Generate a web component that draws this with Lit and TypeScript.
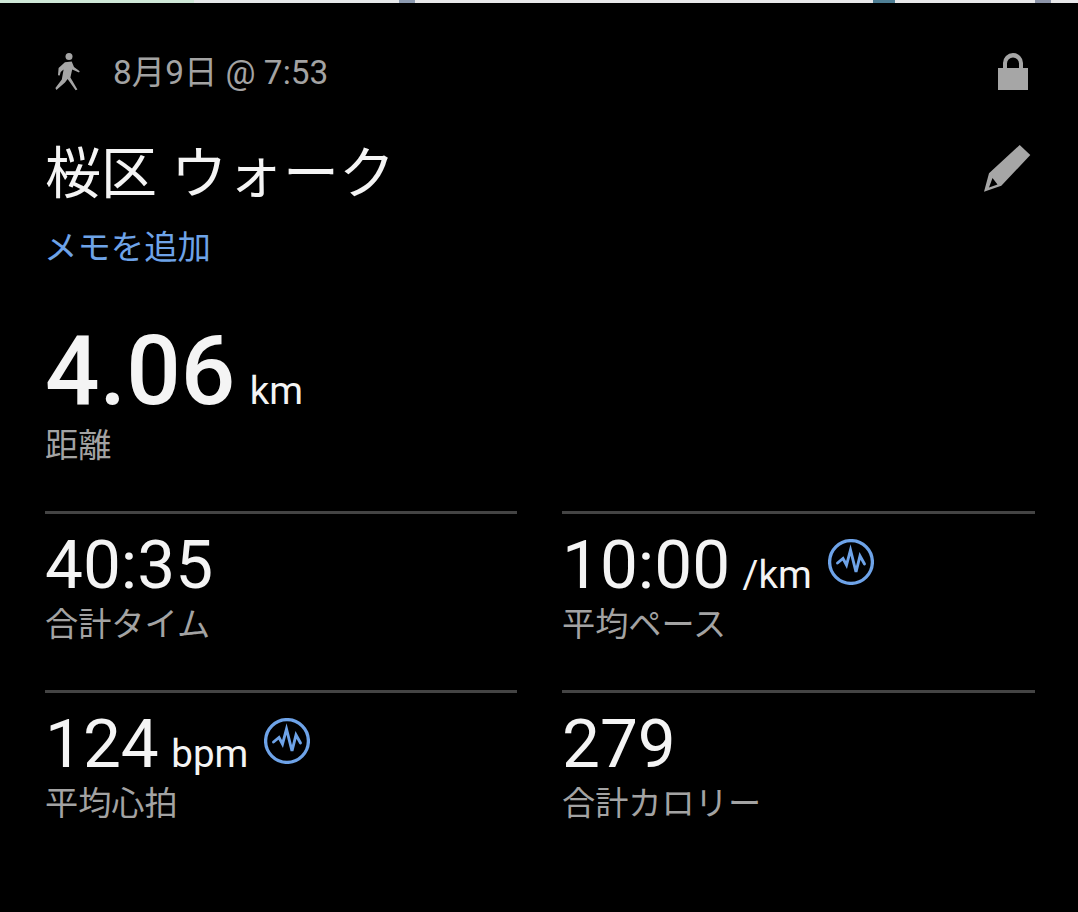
import { LitElement, html, css, svg } from 'lit';
import { customElement } from 'lit/decorators.js';

const pulseIcon = html`<svg class="pulse" viewBox="0 0 46 46" width="46" height="46">
  <circle cx="23" cy="23" r="21.4" fill="none" stroke="#6ea3e8" stroke-width="3.3"></circle>
  <path d="M9.5 24 L15 19.5 L18.5 26 L22.5 11 L28 33 L32 17 L36.5 25" fill="none" stroke="#6ea3e8" stroke-width="2.9" stroke-linejoin="miter" stroke-linecap="round"></path>
</svg>`;

const walker = svg`<circle cx="14" cy="3.6" r="3.5"></circle>
  <path d="M9.9 9.2 L16.7 8.5 L19 13.9 L24.7 18.2 L24 19.6 L17.2 16.6 L15.4 24.4 L22.4 36.6 L20.6 37.2 L12.6 26 L10 29.6 L1.4 37 L0.4 35 L6.8 26.4 L8.6 16.4 L5.7 19 L4.7 22.6 L3 22.2 L3.6 15 Z"></path>`;

interface Stat {
  value: string;
  unit?: string;
  label: string;
  pulse?: boolean;
}

const stats: Stat[] = [
  { value: '40:35', label: '合計タイム' },
  { value: '10:00', unit: '/km', label: '平均ペース', pulse: true },
  { value: '124', unit: 'bpm', label: '平均心拍', pulse: true },
  { value: '279', label: '合計カロリー' },
];

@customElement('app-root')
export class AppRoot extends LitElement {
  static styles = css`
    :host {
      display: block;
      width: 1078px;
      height: 912px;
      background: #000;
      overflow: hidden;
      font-family: Roboto, 'Noto Sans CJK JP', sans-serif;
      color: #f4f4f4;
    }
    .map-strip {
      height: 3px;
      background: linear-gradient(90deg, #cfe8d8 0 18%, #e6e8ea 18% 37%, #8c9ab0 37% 38.5%, #e8e8ea 38.5% 81%, #4f7f95 81% 83%, #e8e8ea 83% 96%, #8c94a8 96% 97.5%, #e8e8ea 97.5%);
    }
    .card {
      padding: 0 43px 0 45px;
    }
    .meta {
      display: flex;
      align-items: center;
      height: 38px;
      margin-top: 50px;
      color: #a3a3a3;
      font-size: 33.4px;
    }
    .meta span {
      margin-bottom: 6px;
    }
    .walker {
      width: 26px;
      height: 38px;
      margin-left: 10px;
      margin-right: 32px;
      fill: #a6a6a6;
    }
    .lock {
      width: 30px;
      height: 38px;
      margin-left: auto;
      margin-right: 7px;
      fill: #a6a6a6;
    }
    .title-row {
      display: flex;
      align-items: flex-start;
      justify-content: space-between;
      height: 62px;
      margin-top: 50px;
    }
    .title {
      font-size: 56px;
      line-height: 62px;
      margin-top: 2px;
      white-space: pre;
    }
    .pencil {
      width: 47px;
      height: 47px;
      margin-top: 4px;
      margin-right: 4px;
      fill: #a6a6a6;
    }
    .memo {
      margin-top: 25px;
      margin-left: -1px;
      height: 40px;
      line-height: 40px;
      font-size: 33.4px;
      color: #6ea3e8;
    }
    .distance {
      display: flex;
      align-items: baseline;
      margin-top: 55px;
      height: 96px;
      line-height: 96px;
    }
    .distance .value {
      font-size: 96px;
      font-weight: 500;
    }
    .distance .unit {
      font-size: 38.5px;
      margin-left: 14.5px;
    }
    .label {
      font-size: 33.2px;
      line-height: 40px;
      color: #a3a3a3;
    }
    .distance-label {
      margin-top: 7px;
    }
    .grid {
      display: grid;
      grid-template-columns: 472px 473px;
      column-gap: 45px;
      margin-top: 45px;
    }
    .stat {
      height: 179px;
      box-sizing: border-box;
      border-top: 3px solid #444;
      padding-top: 17px;
    }
    .stat-line {
      display: flex;
      align-items: baseline;
      height: 68px;
      line-height: 68px;
    }
    .stat-value {
      font-size: 67.5px;
    }
    .stat-unit {
      font-size: 38.5px;
      margin-left: 12.5px;
    }
    .pulse {
      align-self: flex-start;
      margin-left: 16px;
      margin-top: 8px;
    }
    .stat .label {
      margin-top: 6px;
    }
  `;

  renderStat(s: Stat) {
    return html`<div class="stat">
      <div class="stat-line">
        <span class="stat-value">${s.value}</span>
        ${s.unit ? html`<span class="stat-unit">${s.unit}</span>` : ''}
        ${s.pulse ? pulseIcon : ''}
      </div>
      <div class="label">${s.label}</div>
    </div>`;
  }

  render() {
    return html`
      <div class="map-strip"></div>
      <div class="card">
        <div class="meta">
          <svg class="walker" viewBox="0 0 26 38">${walker}</svg>
          <span>8月9日 @ 7:53</span>
          <svg class="lock" viewBox="0 0 30 38">
            <path d="M0 15 H30 V37 H0 Z M5 15 V10 A10 10 0 0 1 25 10 V15 H21 V10.5 A6 6 0 0 0 9 10.5 V15 Z"></path>
          </svg>
        </div>
        <div class="title-row">
          <span class="title">桜区 ウォーク</span>
          <svg class="pencil" viewBox="0 0 47 47">
            <path d="M35.7 0 L46.3 10 L17.3 40.7 L0 46.7 L5 28.3 Z M8.5 33 L5 42.5 L13.5 39.5 Z" fill-rule="evenodd"></path>
          </svg>
        </div>
        <div class="memo">メモを追加</div>
        <div class="distance">
          <span class="value">4.06</span>
          <span class="unit">km</span>
        </div>
        <div class="label distance-label">距離</div>
        <div class="grid">${stats.map((s) => this.renderStat(s))}</div>
      </div>
    `;
  }
}
